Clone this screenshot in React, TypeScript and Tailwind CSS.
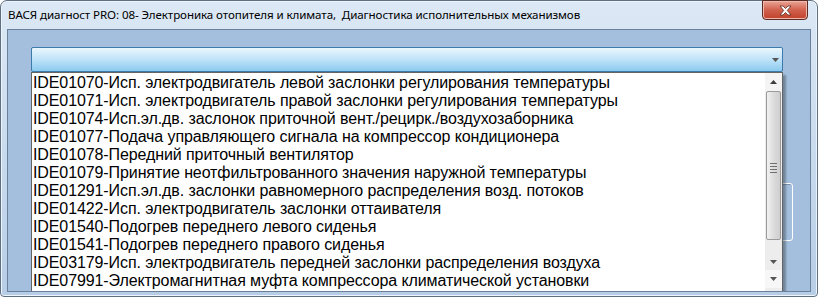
import { FC } from "react";

const items = [
  "IDE01070-Исп. электродвигатель левой заслонки регулирования температуры",
  "IDE01071-Исп. электродвигатель правой заслонки регулирования температуры",
  "IDE01074-Исп.эл.дв. заслонок приточной вент./рецирк./воздухозаборника",
  "IDE01077-Подача управляющего сигнала на компрессор кондиционера",
  "IDE01078-Передний приточный вентилятор",
  "IDE01079-Принятие неотфильтрованного значения наружной температуры",
  "IDE01291-Исп.эл.дв. заслонки равномерного распределения возд. потоков",
  "IDE01422-Исп. электродвигатель заслонки оттаивателя",
  "IDE01540-Подогрев переднего левого сиденья",
  "IDE01541-Подогрев переднего правого сиденья",
  "IDE03179-Исп. электродвигатель передней заслонки распределения воздуха",
  "IDE07991-Электромагнитная муфта компрессора климатической установки",
];

const Arrow: FC<{ up?: boolean }> = ({ up }) => (
  <svg width="7" height="4" viewBox="0 0 7 4">
    <path d={up ? "M0 4 L3.5 0 L7 4 Z" : "M0 0 L7 0 L3.5 4 Z"} fill={up ? "#3c3c3c" : "#555"} />
  </svg>
);

const App: FC = () => {
  return (
    <div className="relative h-[300px] w-[819px] overflow-hidden bg-white">
      {/* Window frame */}
      <div className="flex h-[297px] w-[818px] flex-col rounded-t-[7px] rounded-b-[4px] border border-[#5f6f82] bg-gradient-to-b from-[#dce8f5] via-[#c9dbee] to-[#b7cde6] shadow-[inset_0_0_0_1px_#eef4fb]">
        {/* Title bar */}
        <div className="flex h-[28px] shrink-0 items-start justify-between">
          <span
            className="pt-[6px] pl-[7px] text-[11.6px] leading-[16px] tracking-[-0.1px] text-black"
            style={{ fontFamily: '"Noto Sans", "Open Sans", sans-serif' }}
          >
            ВАСЯ диагност PRO: 08- Электроника отопителя и климата,&nbsp; Диагностика исполнительных механизмов
          </span>
          <div className="mr-[9px] -mt-px flex h-[20px] w-[46px] items-center justify-center rounded-b-[4px] border border-[#5b2b23] bg-gradient-to-b from-[#e9a597] via-[#d0604c] to-[#c2412c] shadow-[inset_0_0_0_1px_#f0b9ad]">
            <svg width="15" height="11" viewBox="0 0 15 11">
              <path
                d="M2 1 H5 L7.5 3.5 L10 1 H13 L9.3 5.5 L13 10 H10 L7.5 7.5 L5 10 H2 L5.7 5.5 Z"
                fill="#ffffff"
                stroke="#5a2a20"
                strokeWidth="0.8"
              />
            </svg>
          </div>
        </div>

        {/* Client area */}
        <div className="relative mx-[6px] mb-[4px] flex-1 overflow-hidden border border-[#6a819c] bg-[#a3bfdd]">
          {/* Group box behind the list */}
          <div className="absolute top-[153px] left-[700px] h-[58px] w-[85px] rounded-[3px] border border-white shadow-[inset_1px_1px_0_#7b93ae]" />

          {/* Combobox */}
          <div className="mt-[17px] ml-[23px] flex h-[25px] w-[752px] items-center justify-end rounded-[2px] border border-[#3d7bad] bg-gradient-to-b from-[#eaf6fd] via-[#bfe3f8] to-[#8bcaef] pr-[3px]">
            <Arrow />
          </div>

          {/* Dropdown list */}
          <div
            className="absolute top-[42px] left-[23px] flex h-[221px] w-[752px] border border-[#646464] bg-white shadow-[3px_3px_2px_rgba(0,0,0,0.3)]"
            style={{ fontFamily: '"Liberation Sans", Arial, sans-serif' }}
          >
            <div className="flex-1 overflow-hidden pt-px pl-[1px]">
              {items.map((t) => (
                <div
                  key={t}
                  className="h-[18px] text-[16px] leading-[18px] tracking-[-0.1px] whitespace-nowrap text-black"
                >
                  {t}
                </div>
              ))}
            </div>

            {/* Scrollbar */}
            <div className="flex w-[17px] flex-col bg-[#ededed]">
              <div className="flex h-[18px] items-center justify-center bg-[#f4f4f4]">
                <Arrow up />
              </div>
              <div className="mx-[1px] h-[149px] rounded-[2px] border border-[#9a9a9a] bg-gradient-to-r from-[#f2f2f2] via-[#dcdcdc] to-[#cfcfcf]">
                <div className="flex h-full flex-col items-center justify-center gap-[2px] pt-[4px]">
                  <div className="h-px w-[7px] bg-[#6f6f6f]" />
                  <div className="h-px w-[7px] bg-[#6f6f6f]" />
                  <div className="h-px w-[7px] bg-[#6f6f6f]" />
                  <div className="h-px w-[7px] bg-[#6f6f6f]" />
                </div>
              </div>
              <div className="flex h-[30px] items-end justify-center pb-[6px]">
                <Arrow />
              </div>
              <div className="flex h-[18px] items-center justify-center bg-[#f7f7f7]">
                <Arrow />
              </div>
            </div>
          </div>
        </div>
      </div>
    </div>
  );
};

export default App;
